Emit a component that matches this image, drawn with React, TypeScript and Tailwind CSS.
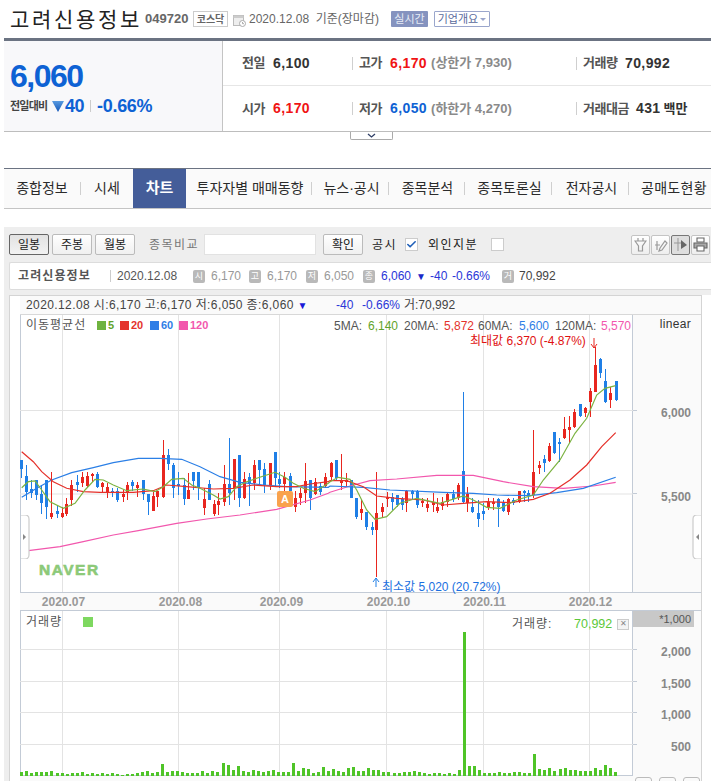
import { Check } from "lucide-react";

const RED = "#e8261f";
const BLUE = "#1f7fe6";

type Candle = [number, "R" | "B", number, number, number, number];

// measured off the picture: x, colour, wick top, body top, body bottom, wick bottom
const leftCandles: Candle[] = [
  [64, "B", 120, 120, 147, 175], [79, "B", 135, 168, 215, 240], [94, "B", 180, 208, 218, 235], [109, "B", 180, 180, 224, 240],
  [124, "B", 195, 222, 248, 282], [139, "B", 180, 180, 262, 297], [154, "R", 155, 280, 290, 298], [172, "B", 255, 273, 282, 295],
  [187, "R", 260, 280, 290, 295], [199, "R", 235, 252, 282, 288], [214, "R", 180, 195, 240, 258], [230, "B", 165, 186, 194, 215],
  [247, "R", 155, 171, 188, 200], [262, "R", 155, 168, 197, 205], [277, "R", 160, 162, 168, 185], [291, "B", 155, 162, 200, 205],
  [307, "R", 185, 190, 200, 215], [322, "R", 190, 202, 215, 235], [337, "B", 205, 212, 220, 230], [352, "B", 205, 212, 240, 247],
  [369, "R", 210, 222, 232, 245], [382, "R", 185, 196, 218, 240], [397, "B", 180, 186, 198, 212], [412, "R", 185, 196, 204, 230],
  [430, "B", 180, 180, 223, 240], [445, "B", 222, 222, 245, 285], [460, "R", 215, 228, 272, 272], [472, "R", 212, 212, 232, 260],
  [490, "R", 60, 105, 232, 235], [505, "B", 88, 105, 132, 150], [520, "B", 130, 135, 204, 235], [535, "B", 155, 192, 197, 225],
  [553, "B", 175, 196, 237, 255], [565, "R", 160, 210, 237, 237], [580, "B", 155, 156, 182, 210], [595, "B", 155, 156, 205, 240],
  [613, "R", 205, 238, 265, 285], [628, "B", 180, 193, 240, 240], [643, "R", 240, 252, 282, 288], [655, "R", 218, 243, 254, 285],
  [671, "R", 135, 193, 245, 258], [688, "B", 55, 193, 218, 255], [703, "R", 118, 118, 205, 240], [718, "B", 105, 105, 235, 262],
  [733, "R", 155, 178, 235, 238], [748, "B", 160, 172, 192, 258], [763, "R", 120, 135, 190, 210], [778, "B", 120, 120, 150, 195],
  [793, "B", 130, 148, 195, 218], [811, "R", 128, 130, 198, 210], [826, "B", 97, 97, 175, 200], [838, "B", 155, 178, 192, 205],
  [853, "R", 155, 172, 192, 215], [871, "B", 160, 168, 213, 213], [886, "R", 212, 235, 262, 275], [901, "R", 205, 218, 235, 255],
  [916, "R", 128, 182, 220, 250], [931, "B", 180, 180, 235, 270], [946, "R", 175, 187, 222, 225], [961, "B", 190, 197, 215, 225],
  [976, "R", 158, 172, 198, 205],
];

const rightCandles: Candle[] = [
  [3, "R", 395, 400, 440, 450], [18, "B", 390, 390, 445, 450], [33, "R", 372, 452, 458, 480], [48, "R", 430, 450, 455, 470],
  [63, "B", 450, 450, 505, 505], [78, "B", 505, 505, 560, 567], [93, "R", 510, 538, 550, 570], [108, "B", 545, 545, 592, 600],
  [126, "B", 575, 592, 600, 615], [139, "R", 425, 550, 600, 741], [155, "R", 520, 532, 545, 560], [170, "R", 485, 500, 505, 530],
  [186, "B", 490, 500, 515, 540], [201, "B", 495, 495, 525, 530], [217, "B", 500, 508, 525, 540], [229, "R", 480, 483, 520, 545],
  [245, "B", 480, 483, 493, 510], [262, "B", 480, 482, 525, 535], [277, "R", 505, 512, 520, 530], [292, "R", 505, 522, 533, 545],
  [308, "R", 490, 517, 525, 545], [322, "R", 505, 532, 542, 550], [337, "R", 500, 517, 527, 540], [352, "R", 490, 492, 515, 530],
  [368, "B", 480, 492, 507, 515], [384, "R", 458, 465, 505, 510], [400, "B", 185, 424, 515, 520], [412, "R", 470, 492, 518, 545],
  [427, "B", 505, 532, 545, 550], [445, "B", 510, 550, 567, 590], [460, "B", 520, 544, 551, 570], [475, "R", 505, 516, 530, 540],
  [490, "R", 505, 515, 518, 540], [505, "B", 505, 508, 530, 590], [520, "B", 510, 518, 542, 545], [535, "R", 505, 508, 545, 555],
  [550, "B", 505, 510, 520, 525], [568, "R", 482, 484, 515, 520], [583, "B", 480, 484, 490, 515], [595, "B", 480, 488, 496, 515],
  [610, "R", 300, 427, 495, 505], [627, "R", 393, 405, 415, 432], [643, "B", 375, 388, 398, 425], [658, "R", 340, 348, 392, 395],
  [673, "B", 305, 307, 370, 372], [688, "B", 325, 337, 342, 395], [703, "R", 260, 298, 324, 328], [718, "R", 258, 292, 300, 340],
  [733, "R", 238, 247, 292, 295], [750, "B", 222, 223, 258, 260], [766, "R", 232, 235, 250, 260], [779, "R", 175, 183, 215, 260],
  [794, "R", 52, 106, 185, 187], [809, "B", 85, 87, 130, 143], [826, "B", 118, 154, 215, 220], [841, "R", 170, 188, 210, 235],
  [857, "B", 153, 153, 210, 213],
];

const candles: Candle[] = [
  ...leftCandles.map(([x, c, a, b, d, e]): Candle => [x / 3, c, 420 + a / 3, 420 + b / 3, 420 + d / 3, 420 + e / 3]),
  ...rightCandles.map(([x, c, a, b, d, e]): Candle => [330 + x / 3, c, 330 + a / 3, 330 + b / 3, 330 + d / 3, 330 + e / 3]),
];

function line(left: number[][], right: number[][]) {
  const a = left.map(([x, y]) => `${(x / 3).toFixed(1)},${(420 + y / 3).toFixed(1)}`);
  const b = right.map(([x, y]) => `${(330 + x / 3).toFixed(1)},${(330 + y / 3).toFixed(1)}`);
  return [...a, ...b].join(" ");
}

const ma5 = line(
  [[65, 203], [85, 185], [105, 183], [125, 210], [150, 245], [190, 265], [225, 250], [255, 210], [285, 178], [310, 180], [340, 195], [380, 212], [430, 207], [465, 215], [490, 200], [515, 178], [550, 175], [575, 195], [600, 205], [640, 225], [660, 237], [685, 230], [710, 200], [740, 185], [770, 175], [800, 165], [825, 157], [855, 172], [880, 190], [910, 205], [945, 215], [985, 190]],
  [[0, 455], [25, 442], [60, 448], [80, 480], [110, 540], [135, 568], [170, 560], [210, 520], [260, 505], [330, 520], [400, 498], [430, 510], [470, 532], [510, 535], [560, 510], [610, 495], [640, 450], [690, 390], [735, 310], [770, 265], [800, 195], [825, 175], [857, 167]]
);
const ma20 = line(
  [[65, 95], [100, 125], [125, 155], [160, 185], [200, 205], [250, 215], [300, 217], [400, 217], [460, 212], [500, 195], [560, 200], [640, 207], [700, 205], [760, 195], [830, 200], [890, 200], [930, 192], [985, 185]],
  [[0, 452], [50, 452], [100, 470], [140, 498], [200, 505], [280, 510], [340, 525], [400, 520], [470, 515], [540, 518], [610, 508], [660, 490], [720, 450], [770, 405], [815, 350], [857, 308]]
);
const ma60 = line(
  [[65, 232], [110, 205], [155, 180], [215, 158], [280, 143], [340, 128], [415, 115], [480, 115], [545, 118], [600, 140], [660, 170], [720, 187], [790, 195], [860, 200], [985, 202]],
  [[0, 468], [100, 472], [180, 480], [340, 487], [430, 490], [500, 495], [600, 497], [680, 488], [760, 475], [857, 442]]
);
const ma120 = line(
  [[85, 392], [180, 380], [250, 365], [340, 345], [415, 332], [530, 310], [620, 297], [720, 285], [830, 268], [930, 240], [985, 220]],
  [[0, 487], [60, 468], [120, 452], [200, 447], [320, 436], [430, 436], [520, 455], [610, 470], [700, 475], [790, 468], [857, 457]]
);

const volumes = [
  4, 5, 3, 4, 4, 4, 5, 3, 3, 2, 3, 3, 4, 2, 3, 2, 3, 2, 3, 2, 1, 2, 2, 3, 4, 5, 3, 4, 12, 4, 5, 5, 4, 3, 3, 3, 5, 3, 5, 4,
  13, 11, 6, 10, 5, 4, 6, 5, 4, 5, 6, 4, 4, 4, 13, 5, 8, 7, 3, 4, 9, 5, 7, 5, 4, 8, 9, 5, 5,
  8, 6, 6, 4, 4, 3, 3, 4, 4, 5, 4, 3, 2, 3, 3, 2, 3, 2, 6, 144,
  10, 10, 6, 3, 3, 3, 4, 3, 3, 4, 4, 3, 3, 22, 7, 6, 8, 5, 7, 8, 6, 6, 5, 5, 5, 8, 6, 11, 8, 4,
];

const gridX = [62.5, 178.5, 279.5, 386.5, 483.5, 589.5];
const months = ["2020.07", "2020.08", "2020.09", "2020.10", "2020.11", "2020.12"];
const monthCenter = [63.5, 180.5, 281.5, 388.5, 484.5, 590.5];

const tabs = [
  { label: "종합정보", w: "w-[76px]" },
  { label: "시세", w: "w-[52px]" },
  { label: "차트", w: "w-[53px]", active: true },
  { label: "투자자별 매매동향", w: "w-[125px] pl-[3px]" },
  { label: "뉴스·공시", w: "w-[76px] pl-[3px]" },
  { label: "종목분석", w: "w-[75px] pl-[2px]" },
  { label: "종목토론실", w: "w-[86px] pl-[3px]" },
  { label: "전자공시", w: "w-[76px] pl-[3px]" },
];

function Sep() {
  return <span className="h-[13px] w-px bg-[#cfcfcf]" />;
}

function Stat({ label, value, color, labelW }: { label: string; value: string; color: string; labelW: string }) {
  return (
    <div className="flex items-center">
      <span className={`${labelW} text-[13px] font-bold tracking-[-0.5px] text-[#555]`}>{label}</span>
      <span className={`${color} text-[14px] font-bold tracking-[0.4px]`}>{value}</span>
    </div>
  );
}

function ToolButton({ label, active }: { label: string; active?: boolean }) {
  return (
    <button
      className={
        active
          ? "flex h-[21px] w-[40px] items-center justify-center rounded-[2px] border border-[#666] bg-gradient-to-b from-[#e2e2e2] to-[#f2f2f2] text-[12px] text-[#222]"
          : "flex h-[21px] w-[40px] items-center justify-center rounded-[2px] border border-[#bbb] bg-gradient-to-b from-white to-[#f0f0f0] text-[12px] text-[#222]"
      }
    >
      {label}
    </button>
  );
}

function Chip({ label }: { label: string }) {
  return (
    <span className="flex h-[13px] w-[12px] items-center justify-center rounded-[2px] bg-[#b9b9b9] text-[9px] leading-none text-white">
      {label}
    </span>
  );
}

function IconBtn({ children, active }: { children: React.ReactNode; active?: boolean }) {
  return (
    <span
      className={
        active
          ? "flex h-[20px] w-[19px] items-center justify-center rounded-[2px] border border-[#777] bg-[#dedede]"
          : "flex h-[20px] w-[19px] items-center justify-center rounded-[2px] border border-[#c4c4c4] bg-gradient-to-b from-white to-[#eee]"
      }
    >
      {children}
    </span>
  );
}

function SideTab({ side }: { side: "left" | "right" }) {
  const left = side === "left";
  return (
    <svg width="9" height="44" viewBox="0 0 9 44" className={left ? "absolute left-0 top-[200px]" : "absolute right-0 top-[200px]"}>
      {left ? (
        <>
          <path d="M0 0 H4 Q8 0 8 4 V40 Q8 44 4 44 H0 Z" fill="#fff" />
          <path d="M0 0 H4 Q8 0 8 4 V40 Q8 44 4 44 H0" fill="none" stroke="#ccc" strokeWidth="1.2" />
          <path d="M2 19 L5 22 L2 25 Z" fill="#888" />
        </>
      ) : (
        <>
          <path d="M9 0 H5 Q1 0 1 4 V40 Q1 44 5 44 H9 Z" fill="#fff" />
          <path d="M9 0 H5 Q1 0 1 4 V40 Q1 44 5 44 H9" fill="none" stroke="#ccc" strokeWidth="1.2" />
          <path d="M7 19 L4 22 L7 25 Z" fill="#888" />
        </>
      )}
    </svg>
  );
}

export default function App() {
  return (
    <div className="relative h-[781px] w-[711px] overflow-hidden bg-white font-['Liberation_Sans','Noto_Sans_CJK_KR',sans-serif]">
      {/* title */}
      <div className="flex h-[38px] items-center pl-[10px]">
        <span className="w-[135px] text-[21px] leading-none tracking-[2.7px] text-[#222]">고려신용정보</span>
        <span className="w-[48px] text-[13px] font-bold text-[#666]">049720</span>
        <span className="flex h-[16px] w-[35px] items-center justify-center border border-[#ccc] text-[10px] font-bold text-[#666]">코스닥</span>
        <svg width="13" height="13" viewBox="0 0 13 13" className="ml-[5px] mt-[2px]">
          <rect x="0.5" y="1.5" width="10" height="10" fill="#eee" stroke="#bbb" />
          <rect x="0.5" y="1.5" width="10" height="2.5" fill="#ccc" />
          <circle cx="9.5" cy="9.5" r="3" fill="#fff" stroke="#aaa" />
          <path d="M9.5 8 V9.7 H11" fill="none" stroke="#aaa" />
        </svg>
        <span className="ml-[3px] w-[142px] text-[12px] text-[#666]">2020.12.08&nbsp; 기준(장마감)</span>
        <span className="flex h-[16px] w-[37px] items-center justify-center rounded-[1px] bg-[#8593bf] text-[11px] text-[#e8ecf6]">실시간</span>
        <span className="ml-[6px] flex h-[16px] w-[56px] items-center justify-center gap-[2px] rounded-[1px] border border-[#9aa6cc] text-[11px] text-[#5a6a9c]">
          기업개요
          <span className="mt-[1px] h-0 w-0 border-x-[3px] border-t-[3px] border-x-transparent border-t-[#9aa6cc]" />
        </span>
      </div>

      {/* summary */}
      <div className="ml-[4px] flex h-[94px] border-b border-t-[3px] border-b-[#bdbdbd] border-t-[#6b7382]">
        <div className="flex w-[219px] flex-col border-r border-[#c4c4c4] bg-[#f8f8fa] pl-[6px]">
          <span className="mt-[17px] text-[32px] font-bold leading-[36px] tracking-[-1.5px] text-[#0e62d4]">6,060</span>
          <div className="mt-[3px] flex items-center">
            <span className="w-[42px] text-[11px] font-bold tracking-[-0.8px] text-[#444]">전일대비</span>
            <svg width="12" height="13" viewBox="0 0 12 13">
              <defs>
                <linearGradient id="tri" x1="0" y1="0" x2="0" y2="1">
                  <stop offset="0" stopColor="#5a9be0" />
                  <stop offset="1" stopColor="#1256b8" />
                </linearGradient>
              </defs>
              <path d="M0 1 H12 L6 12 Z" fill="url(#tri)" />
            </svg>
            <span className="ml-[1px] text-[18px] font-bold leading-none tracking-[-0.5px] text-[#0e62d4]">40</span>
            <span className="mx-[6px] h-[12px] w-px bg-[#ccc]" />
            <span className="text-[18px] font-bold leading-none tracking-[-0.3px] text-[#0e62d4]">-0.66%</span>
          </div>
        </div>
        <div className="flex flex-1 flex-col">
          <div className="flex h-[45px] items-center border-b border-[#e6e6e6]">
            <div className="w-[129px] pl-[19px]">
              <Stat label="전일" value="6,100" color="text-[#333]" labelW="w-[31px]" />
            </div>
            <div className="flex w-[224px] items-center gap-[6px]">
              <Sep />
              <Stat label="고가" value="6,170" color="text-[#f01414]" labelW="w-[31px]" />
              <span className="ml-[-2px] text-[13px] font-bold text-[#8a8a8a]">(상한가 7,930)</span>
            </div>
            <div className="flex items-center gap-[6px]">
              <Sep />
              <Stat label="거래량" value="70,992" color="text-[#333]" labelW="w-[42px]" />
            </div>
          </div>
          <div className="flex flex-1 items-center">
            <div className="w-[129px] pl-[19px]">
              <Stat label="시가" value="6,170" color="text-[#f01414]" labelW="w-[31px]" />
            </div>
            <div className="flex w-[224px] items-center gap-[6px]">
              <Sep />
              <Stat label="저가" value="6,050" color="text-[#0e62d4]" labelW="w-[31px]" />
              <span className="ml-[-2px] text-[13px] font-bold text-[#8a8a8a]">(하한가 4,270)</span>
            </div>
            <div className="flex items-center gap-[6px]">
              <Sep />
              <Stat label="거래대금" value="431" color="text-[#333]" labelW="w-[53px]" />
              <span className="ml-[-3px] text-[13px] font-bold text-[#333]">백만</span>
            </div>
          </div>
        </div>
      </div>
      <div className="ml-[350px] flex h-[8px] w-[43px] items-center justify-center rounded-b-[2px] border-x border-b border-[#aaa]">
        <svg width="9" height="5" viewBox="0 0 9 5">
          <path d="M1 1 L4.5 4 L8 1" fill="none" stroke="#2f3f66" strokeWidth="1.3" />
        </svg>
      </div>

      {/* tabs */}
      <nav className="ml-[4px] mt-[28px] flex h-[41px] items-center border-b border-t border-b-[#c4c4c4] border-t-[#6b7382] bg-[#fafafa] text-[14px] text-[#2b2b2b]">
        {tabs.map((t, i) => (
          <div key={t.label} className="contents">
            {t.active ? (
              <span className={`${t.w} flex h-full items-center justify-center bg-[#445d99] text-[15px] font-bold text-white`}>{t.label}</span>
            ) : (
              <span className={`${t.w} flex h-full items-center justify-center`}>{t.label}</span>
            )}
            {i !== 1 && i !== 2 && <Sep />}
          </div>
        ))}
        <span className="whitespace-nowrap pl-[12px] tracking-[0.3px]">공매도현황</span>
      </nav>

      {/* chart block */}
      <div className="ml-[4px] mt-[18px]">
        <div className="bg-[#eeeeee] pb-[5px]">
          <div className="flex h-[35px] items-center pl-[5px] pr-[1px]">
            <ToolButton label="일봉" active />
            <span className="w-[3px]" />
            <ToolButton label="주봉" />
            <span className="w-[3px]" />
            <ToolButton label="월봉" />
            <span className="ml-[14px] w-[55px] text-[12px] tracking-[1.5px] text-[#777]">종목비교</span>
            <span className="h-[21px] w-[112px] border border-[#e2e2e2] bg-white" />
            <span className="ml-[7px]">
              <ToolButton label="확인" />
            </span>
            <span className="ml-[9px] w-[33px] text-[12px] tracking-[1.5px] text-[#222]">공시</span>
            <span className="flex h-[13px] w-[13px] items-center justify-center border border-[#ccc] bg-white">
              <Check size={11} strokeWidth={3.5} color="#1f5fb8" />
            </span>
            <span className="ml-[10px] w-[63px] text-[12px] tracking-[1.5px] text-[#222]">외인지분</span>
            <span className="h-[13px] w-[13px] border border-[#ccc] bg-white" />
            <div className="ml-auto flex gap-[1px]">
              <IconBtn>
                <svg width="13" height="15" viewBox="0 0 13 15" fill="none" stroke="#999" strokeWidth="1.2">
                  <path d="M4 1 V4 M9 1 V4 M1 4 H12 L8.5 9 V14 H4.5 V9 Z" />
                </svg>
              </IconBtn>
              <IconBtn>
                <svg width="14" height="14" viewBox="0 0 14 14" fill="none" stroke="#999" strokeWidth="1.2">
                  <path d="M1 7 H6 M3 3 V12 M6 10 L11 3 L13 5 L8 12 L5 13 Z" />
                </svg>
              </IconBtn>
              <IconBtn active>
                <svg width="15" height="15" viewBox="0 0 15 15">
                  <path d="M5 1 V14 M1 6 H8" stroke="#999" fill="none" />
                  <path d="M8 3 L14 8 L8 12 Z" fill="#666" />
                </svg>
              </IconBtn>
              <IconBtn>
                <svg width="15" height="15" viewBox="0 0 15 15" stroke="#666" strokeWidth="1.1">
                  <path d="M4 5 V1 H11 V5 Z" fill="#fff" />
                  <path d="M1 6 H14 V11 H1 Z" fill="#aaa" />
                  <path d="M4 9 H11 V14 H4 Z" fill="#fff" />
                </svg>
              </IconBtn>
            </div>
          </div>
          <div className="ml-[5px] flex h-[28px] items-center rounded-l-[2px] border border-r-0 border-[#dcdcdc] bg-white pl-[8px] text-[12px] text-[#999]">
            <span className="w-[92px] font-bold tracking-[1.1px] text-[#555]">고려신용정보</span>
            <span className="h-[12px] w-px bg-[#ccc]" />
            <span className="ml-[6px] w-[76px] text-[#555]">2020.12.08</span>
            <Chip label="시" />
            <span className="ml-[6px] w-[38px]">6,170</span>
            <Chip label="고" />
            <span className="ml-[6px] w-[39px]">6,170</span>
            <Chip label="저" />
            <span className="ml-[6px] w-[39px]">6,050</span>
            <Chip label="종" />
            <span className="ml-[6px] w-[35px] text-[#2a35d8]">6,060</span>
            <span className="w-[14px] text-[10px] text-[#1a2ac8]">▼</span>
            <span className="w-[22px] text-[#2a35d8]">-40</span>
            <span className="w-[50px] text-[#2a35d8]">-0.66%</span>
            <Chip label="거" />
            <span className="ml-[5px] text-[#444]">70,992</span>
          </div>
        </div>

        <div className="flex">
          <span className="w-[5px] shrink-0 bg-[#eeeeee]" />
          <div className="flex w-[693px] shrink-0 border-l border-r border-t border-[#d4d4d4] bg-[#fafafa]">
            <div className="w-[10px] shrink-0 bg-white" />
            <div className="flex-1">
              {/* quote line */}
              <div className="flex h-[19px] items-center gap-[4px] border-b border-[#d8d8d8] pl-[6px] text-[12px] text-[#444]">
                <span className="w-[306px] whitespace-nowrap tracking-[0.4px]">2020.12.08 시:6,170 고:6,170 저:6,050 종:6,060 <span className="text-[10px] text-[#1a1ad8]">▼</span></span>
                <span className="w-[22px] text-[#2a35d8]">-40</span>
                <span className="w-[38px] text-[#2a35d8]">-0.66%</span>
                <span>거:70,992</span>
              </div>

              {/* price */}
              <div className="flex h-[277px]">
                <div className="relative h-full w-[613px] shrink-0 border-l border-r border-[#c3cbd6] bg-white">
                  <svg width="613" height="277" viewBox="20 315 613 277" className="absolute left-[-1px] top-0">
                    {gridX.map((x) => (
                      <line key={x} x1={x} x2={x} y1="315" y2="592" stroke="#e3e3e3" />
                    ))}
                    <line x1="20" x2="633" y1="410.5" y2="410.5" stroke="#e3e3e3" />
                    <line x1="20" x2="633" y1="494" y2="494" stroke="#e3e3e3" />
                    {candles.map(([x, c, wt, bt, bb, wb]) => {
                      const fill = c === "R" ? RED : BLUE;
                      const cx = Math.round(x);
                      return (
                        <g key={x} shapeRendering="crispEdges">
                          <rect x={cx} y={wt} width="1" height={wb - wt} fill={fill} />
                          <rect x={cx - 1} y={bt} width="3" height={Math.max(bb - bt, 2)} fill={fill} />
                        </g>
                      );
                    })}
                    <polyline points={ma120} fill="none" stroke="#f257ad" strokeWidth="1.2" />
                    <polyline points={ma60} fill="none" stroke="#2b7fe6" strokeWidth="1.2" />
                    <polyline points={ma20} fill="none" stroke="#e5302a" strokeWidth="1.2" />
                    <polyline points={ma5} fill="none" stroke="#7cb342" strokeWidth="1.2" />
                    <path d="M594 338 V348 M591 344 L594 348 L597 344" fill="none" stroke={RED} />
                    <path d="M376 587 V578 M373 582 L376 578 L379 582" fill="none" stroke={BLUE} />
                  </svg>
                  <div className="absolute left-[5px] top-[1px] flex h-[18px] items-center text-[12px]">
                    <span className="w-[71px] tracking-[1px] text-[#555]">이동평균선</span>
                    <span className="h-[9px] w-[9px] bg-[#6fb33f]" />
                    <span className="ml-[2px] w-[12px] text-[11px] font-bold text-[#5fa32a]">5</span>
                    <span className="h-[9px] w-[9px] bg-[#e4332c]" />
                    <span className="ml-[2px] w-[19px] text-[11px] font-bold text-[#e4332c]">20</span>
                    <span className="h-[9px] w-[9px] bg-[#2f7ee6]" />
                    <span className="ml-[2px] w-[18px] text-[11px] font-bold text-[#2f7ee6]">60</span>
                    <span className="h-[9px] w-[9px] bg-[#f257ad]" />
                    <span className="ml-[2px] text-[11px] font-bold text-[#f257ad]">120</span>
                  </div>
                  <div className="absolute left-[313px] top-[2px] flex h-[18px] items-center whitespace-nowrap text-[12px] text-[#555]">
                    <span className="w-[34px]">5MA:</span>
                    <span className="w-[36px] text-[#5fa32a]">6,140</span>
                    <span className="w-[40px]">20MA:</span>
                    <span className="w-[34px] text-[#e4332c]">5,872</span>
                    <span className="w-[41px]">60MA:</span>
                    <span className="w-[36px] text-[#2f7ee6]">5,600</span>
                    <span className="w-[46px]">120MA:</span>
                    <span className="text-[#f257ad]">5,570</span>
                  </div>
                  <span className="absolute left-[449px] top-[17px] whitespace-nowrap text-[12px] text-[#e01010]">최대값 6,370 (-4.87%)</span>
                  <span className="absolute left-[361px] top-[263px] whitespace-nowrap text-[12px] text-[#1a6fe0]">최소값 5,020 (20.72%)</span>
                  <span className="absolute left-[256px] top-[176px] flex h-[16px] w-[16px] items-center justify-center rounded-[2px] bg-[#f9a24d] text-[11px] font-bold text-white">A</span>
                  <span className="absolute left-[18px] top-[247px] text-[15.5px] font-black leading-[16px] tracking-[1.5px] text-[#8cc978] [-webkit-text-stroke:0.6px_#8cc978]">NAVER</span>
                  <SideTab side="left" />
                </div>
                <div className="relative flex-1 text-[12px] font-bold text-[#888]">
                  <span className="absolute right-[10px] top-[0px] text-[12px] font-normal tracking-[0.3px] text-[#333]">linear</span>
                  <span className="absolute left-0 top-[95px] h-px w-[4px] bg-[#c3cbd6]" />
                  <span className="absolute left-0 top-[178px] h-px w-[4px] bg-[#c3cbd6]" />
                  <span className="absolute right-[10px] top-[89px]">6,000</span>
                  <span className="absolute right-[10px] top-[173px]">5,500</span>
                  <SideTab side="right" />
                </div>
              </div>

              {/* months */}
              <div className="h-[19px] border-b border-t border-[#c3cbd6]">
                <svg width="613" height="17" viewBox="20 593 613 17" className="block">
                  {months.map((m, i) => (
                    <text key={m} x={monthCenter[i]} y="606" textAnchor="middle" fontSize="12" fontWeight="700" fill="#999">
                      {m}
                    </text>
                  ))}
                </svg>
              </div>

              {/* volume */}
              <div className="flex h-[165px]">
                <div className="relative h-full w-[613px] shrink-0 border-b border-l border-r border-[#c3cbd6] bg-white">
                  <svg width="613" height="165" viewBox="20 611 613 165" className="absolute left-[-1px] top-0">
                    {gridX.map((x) => (
                      <line key={x} x1={x} x2={x} y1="611" y2="776" stroke="#e3e3e3" />
                    ))}
                    {[649.5, 681.5, 712.5, 744.5].map((y) => (
                      <line key={y} x1="20" x2="633" y1={y} y2={y} stroke="#e3e3e3" />
                    ))}
                    {volumes.map((h, i) => (
                      <rect key={i} x={Math.round(20.3 + 5.03 * i)} y={776 - h} width="3" height={h} fill="#4fc428" />
                    ))}
                  </svg>
                  <div className="absolute left-[5px] top-[2px] flex h-[18px] items-center text-[12px] tracking-[1px] text-[#555]">
                    <span className="w-[57px]">거래량</span>
                    <span className="h-[10px] w-[10px] bg-[#7ed860]" />
                  </div>
                  <div className="absolute left-[491px] top-[4px] flex h-[18px] items-center text-[12px]">
                    <span className="w-[62px] tracking-[1px] text-[#555]">거래량:</span>
                    <span className="w-[43px] text-[12.5px] text-[#5cc83a]">70,992</span>
                    <span className="flex h-[11px] w-[12px] items-center justify-center border border-[#ccc] bg-[#f4f4f4] text-[8px] leading-none text-[#888]">✕</span>
                  </div>
                </div>
                <div className="relative flex-1 text-[12px] font-bold text-[#888]">
                  <div className="mr-[7px] flex h-[16px] items-center justify-end bg-[#c8c8c8] pr-[3px] text-[11px] font-normal text-[#555]">*1,000</div>
                  <span className="absolute left-0 top-[38px] h-px w-[4px] bg-[#c3cbd6]" />
                  <span className="absolute left-0 top-[70px] h-px w-[4px] bg-[#c3cbd6]" />
                  <span className="absolute left-0 top-[101px] h-px w-[4px] bg-[#c3cbd6]" />
                  <span className="absolute left-0 top-[133px] h-px w-[4px] bg-[#c3cbd6]" />
                  <span className="absolute right-[10px] top-[32px]">2,000</span>
                  <span className="absolute right-[10px] top-[64px]">1,500</span>
                  <span className="absolute right-[10px] top-[95px]">1,000</span>
                  <span className="absolute right-[10px] top-[127px]">500</span>
                </div>
              </div>

              <div className="flex h-[10px] justify-end gap-[7px] pr-[1px] pt-[1px]">
                <span className="h-[8px] w-[17px] rounded-t-[3px] border border-[#bbb]" />
                <span className="h-[8px] w-[17px] rounded-t-[3px] border border-[#bbb]" />
                <span className="h-[8px] w-[17px] rounded-t-[3px] border border-[#bbb]" />
              </div>
            </div>
          </div>
        </div>
      </div>
    </div>
  );
}
